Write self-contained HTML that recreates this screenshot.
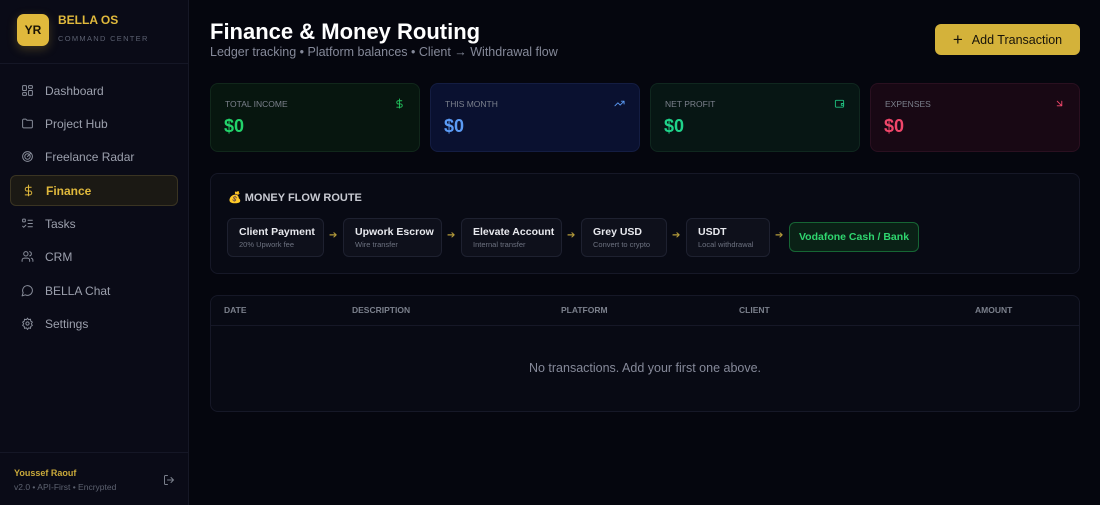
<!DOCTYPE html>
<html><head><style>
*{box-sizing:border-box;margin:0;padding:0}
body{width:1100px;height:505px;background:#05060e;font-family:"Liberation Sans",sans-serif;color:#e5e7eb;position:relative;overflow:hidden}
.sb{position:absolute;left:0;top:0;width:189px;height:505px;background:#0a0b17;border-right:1px solid #161826}
.logo{position:absolute;left:17px;top:14px;width:32px;height:32px;border-radius:7px;background:#e0b93c;color:#1a1405;font-weight:bold;font-size:12px;text-align:center;line-height:32px;box-shadow:0 3px 10px rgba(224,185,60,.25)}
.bt{position:absolute;left:58px;top:13px;color:#e0b93c;font-weight:bold;font-size:12px}
.bs{position:absolute;left:58px;top:34px;color:#5b6070;font-size:7.5px;letter-spacing:1.3px}
.hr{position:absolute;left:0;width:188px;height:1px;background:#151726}
.nav{position:absolute;left:10px;width:168px;height:31px;border-radius:6px;font-size:12px;color:#9ca0ad;display:flex;align-items:center;padding-left:11px}
.nav svg{width:13px;height:13px;margin-right:11px;stroke:#8a8f9c;fill:none;stroke-width:1.8;stroke-linecap:round;stroke-linejoin:round}
.nav.a{background:#1b1914;border:1px solid #3a3422;color:#e0b93c;font-weight:bold}
.nav.a svg{stroke:#e0b93c}
h1{position:absolute;left:210px;top:19px;font-size:22px;font-weight:bold;color:#fff}
.sub{position:absolute;left:210px;top:45px;font-size:12.5px;color:#858999}
.btn{position:absolute;left:935px;top:24px;width:145px;height:31px;border-radius:6px;background:#d4b23a;color:#17130a;font-size:12.5px;display:flex;align-items:center;justify-content:center;gap:9px}
.card{position:absolute;top:83px;width:210px;height:69px;border-radius:8px;border:1px solid}
.card .l{position:absolute;left:14px;top:15px;font-size:8.5px;color:#7b808c}
.card .v{position:absolute;left:13px;top:32px;font-size:18px;font-weight:bold}
.card svg{position:absolute;right:14px;top:14px;width:11px;height:11px;fill:none;stroke-width:2;stroke-linecap:round;stroke-linejoin:round}
.panel{position:absolute;left:210px;width:870px;border:1px solid #161827;background:#080a14;border-radius:8px}
.chip{position:absolute;top:218px;height:39px;border:1px solid #1e2130;background:#0e101b;border-radius:6px;padding:7px 0 0 11px}
.chip b{display:block;font-size:10.5px;color:#e8e9ee}
.chip i{display:block;font-style:normal;font-size:7.5px;color:#6d7280;margin-top:2px}
.ar{position:absolute;top:230px;color:#b39a3a;font-size:10px}
.th{position:absolute;top:305px;font-size:8.5px;font-weight:bold;color:#7b808c}
</style></head><body>
<div class="sb">
<div class="logo">YR</div><div class="bt">BELLA OS</div><div class="bs">COMMAND CENTER</div>
<div class="hr" style="top:63px"></div>
<div class="nav" style="top:75px"><svg viewBox="0 0 24 24"><rect x="3" y="3" width="7" height="9" rx="1"/><rect x="14" y="3" width="7" height="5" rx="1"/><rect x="14" y="12" width="7" height="9" rx="1"/><rect x="3" y="16" width="7" height="5" rx="1"/></svg>Dashboard</div>
<div class="nav" style="top:108px"><svg viewBox="0 0 24 24"><path d="M3 6a2 2 0 0 1 2-2h4l2 2h8a2 2 0 0 1 2 2v10a2 2 0 0 1-2 2H5a2 2 0 0 1-2-2z"/></svg>Project Hub</div>
<div class="nav" style="top:141px"><svg viewBox="0 0 24 24"><circle cx="12" cy="12" r="9"/><circle cx="12" cy="12" r="5"/><path d="M12 12l6-6"/></svg>Freelance Radar</div>
<div class="nav a" style="top:175px"><svg viewBox="0 0 24 24"><path d="M12 2v20M17 6H9.5a3.5 3.5 0 0 0 0 7h5a3.5 3.5 0 0 1 0 7H6"/></svg>Finance</div>
<div class="nav" style="top:208px"><svg viewBox="0 0 24 24"><rect x="3" y="4" width="5" height="5" rx="1"/><path d="M3 17l2 2 4-4M13 6h8M13 12h8M13 18h8"/></svg>Tasks</div>
<div class="nav" style="top:241px"><svg viewBox="0 0 24 24"><circle cx="9" cy="7" r="4"/><path d="M2 21v-2a4 4 0 0 1 4-4h6a4 4 0 0 1 4 4v2M16 3.1a4 4 0 0 1 0 7.8M22 21v-2a4 4 0 0 0-3-3.9"/></svg>CRM</div>
<div class="nav" style="top:275px"><svg viewBox="0 0 24 24"><path d="M7.9 20A9 9 0 1 0 4 16.1L2 22z"/></svg>BELLA Chat</div>
<div class="nav" style="top:308px"><svg viewBox="0 0 24 24"><circle cx="12" cy="12" r="3"/><path d="M12 2l2 3 3.5-1 .5 3.5 3 2-2 3 2 3-3 2-.5 3.5-3.5-1-2 3-2-3-3.5 1-.5-3.5-3-2 2-3-2-3 3-2 .5-3.5 3.5 1z"/></svg>Settings</div>
<div class="hr" style="top:452px"></div>
<div style="position:absolute;left:14px;top:468px;font-size:9px;font-weight:bold;color:#c9a93a">Youssef Raouf</div>
<div style="position:absolute;left:14px;top:482px;font-size:8.5px;color:#5d6270">v2.0 • API-First • Encrypted</div>
<svg style="position:absolute;left:163px;top:474px" width="12" height="12" viewBox="0 0 24 24" fill="none" stroke="#7a7f8b" stroke-width="2" stroke-linecap="round"><path d="M9 21H5a2 2 0 0 1-2-2V5a2 2 0 0 1 2-2h4M16 17l5-5-5-5M21 12H9"/></svg>
</div>

<h1>Finance &amp; Money Routing</h1>
<div class="sub">Ledger tracking • Platform balances • Client → Withdrawal flow</div>
<div class="btn"><span style="font-size:17px;font-weight:300">+</span>Add Transaction</div>

<div class="card" style="left:210px;background:#07160f;border-color:#11271b"><div class="l">TOTAL INCOME</div><div class="v" style="color:#22d36a">$0</div><svg viewBox="0 0 24 24" stroke="#22c55e"><path d="M12 2v20M17 6H9.5a3.5 3.5 0 0 0 0 7h5a3.5 3.5 0 0 1 0 7H6"/></svg></div>
<div class="card" style="left:430px;background:#0a1130;border-color:#141d42"><div class="l">THIS MONTH</div><div class="v" style="color:#5b9bf5">$0</div><svg viewBox="0 0 24 24" stroke="#5b9bf5"><path d="M22 7l-8.5 8.5-5-5L2 17M16 7h6v6"/></svg></div>
<div class="card" style="left:650px;background:#071614;border-color:#10271f"><div class="l">NET PROFIT</div><div class="v" style="color:#1fd38a">$0</div><svg viewBox="0 0 24 24" stroke="#1fc07f"><rect x="3" y="5" width="18" height="15" rx="2"/><path d="M16 12h5v4h-5z"/></svg></div>
<div class="card" style="left:870px;background:#180814;border-color:#2a1020"><div class="l">EXPENSES</div><div class="v" style="color:#f0466a">$0</div><svg viewBox="0 0 24 24" stroke="#f0466a"><path d="M7 7l10 10M17 7v10H7"/></svg></div>

<div class="panel" style="top:173px;height:101px"></div>
<div style="position:absolute;left:228px;top:191px;font-size:11px;font-weight:bold;color:#c8cad2">💰 MONEY FLOW ROUTE</div>
<div class="chip" style="left:227px;width:97px"><b>Client Payment</b><i>20% Upwork fee</i></div>
<div class="ar" style="left:329px">➔</div>
<div class="chip" style="left:343px;width:99px"><b>Upwork Escrow</b><i>Wire transfer</i></div>
<div class="ar" style="left:447px">➔</div>
<div class="chip" style="left:461px;width:101px"><b>Elevate Account</b><i>Internal transfer</i></div>
<div class="ar" style="left:567px">➔</div>
<div class="chip" style="left:581px;width:86px"><b>Grey USD</b><i>Convert to crypto</i></div>
<div class="ar" style="left:672px">➔</div>
<div class="chip" style="left:686px;width:84px"><b>USDT</b><i>Local withdrawal</i></div>
<div class="ar" style="left:775px">➔</div>
<div style="position:absolute;left:789px;top:222px;width:130px;height:30px;border:1px solid #166534;background:#0a2116;border-radius:6px;color:#2fd66f;font-size:10.5px;font-weight:bold;text-align:center;line-height:28px">Vodafone Cash / Bank</div>

<div class="panel" style="top:295px;height:117px"></div>
<div style="position:absolute;left:211px;top:325px;width:868px;height:1px;background:#161827"></div>
<div class="th" style="left:224px">DATE</div>
<div class="th" style="left:352px">DESCRIPTION</div>
<div class="th" style="left:561px">PLATFORM</div>
<div class="th" style="left:739px">CLIENT</div>
<div class="th" style="left:975px">AMOUNT</div>
<div style="position:absolute;left:210px;width:870px;top:361px;text-align:center;font-size:12.5px;color:#858999">No transactions. Add your first one above.</div>
</body></html>
